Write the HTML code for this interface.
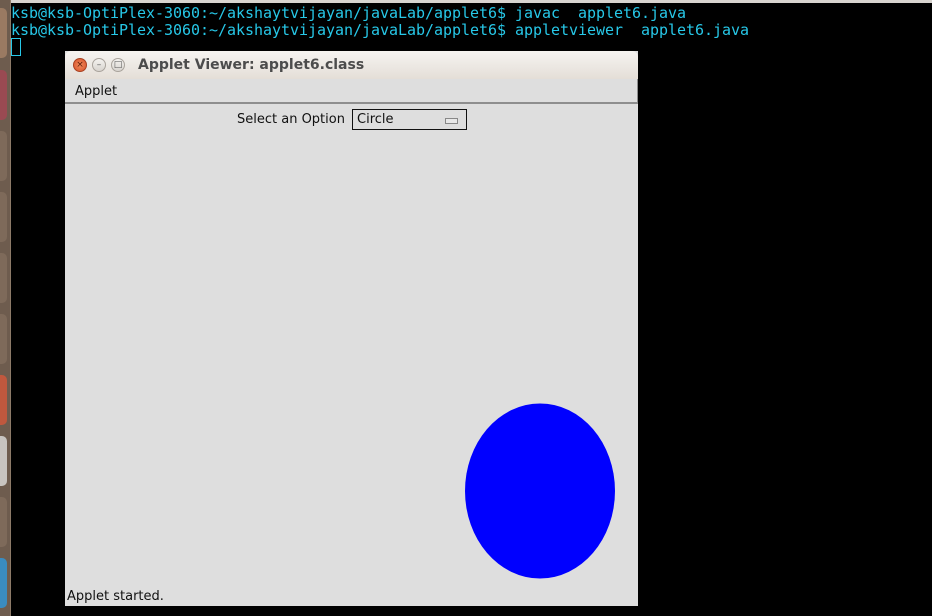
<!DOCTYPE html>
<html><head><style>
body{margin:0;width:932px;height:616px;background:#000;position:relative;overflow:hidden;font-family:"DejaVu Sans",sans-serif}
.top{position:absolute;left:0;top:0;width:932px;height:3px;background:#d8d4cf}
.launch{position:absolute;left:0;top:0;width:10px;height:616px;background:#6e5c4e}
.launch i{position:absolute;left:0;width:7px;height:50px;border-radius:0 5px 5px 0}
.edge{position:absolute;left:10px;top:0;width:1px;height:616px;background:#8c7a68}
.term{position:absolute;left:11px;top:5px;color:#27c8e8;font:15px/17px "DejaVu Sans Mono",monospace;white-space:pre;letter-spacing:-0.03px}
.cur{position:absolute;left:11px;top:38px;width:10px;height:18px;border:1px solid #27c8e8;box-sizing:border-box}
.win{position:absolute;left:65px;top:51px;width:573px;height:555px;background:#dedede}
.tb{height:28px;background:linear-gradient(#f6f4f1,#e4ded7);border-radius:6px 6px 0 0;position:relative}
.tb .t{position:absolute;left:73px;top:6px;font-weight:bold;font-size:14px;color:#4c4c4c}
.btn{position:absolute;top:7px;width:14px;height:14px;border-radius:50%;box-sizing:border-box;border:1px solid #a9a39c;background:linear-gradient(#f4f2ef,#d8d4cf);font-size:9px;line-height:12px;text-align:center;color:#555}
.menu{height:23px;border-bottom:2px solid #8e8e8e;border-right:1px solid #8e8e8e;font-size:13px;padding-left:10px;line-height:26px;color:#111}
.lbl{position:absolute;left:172px;top:61px;font-size:13px;color:#111}
.sel{position:absolute;left:287px;top:58px;width:115px;height:21px;border:1px solid #111;box-sizing:border-box;font-size:13px;line-height:20px;padding-left:4px;color:#111}
.sel b{position:absolute;right:8px;top:8px;width:11px;height:4px;border:1px solid #888;background:#e8e8e8}
.st{position:absolute;left:2px;bottom:2px;font-size:13px;color:#111}
</style></head><body>
<div class="top"></div>
<div class="launch">
<i style="top:8px;background:#9a7a62"></i><i style="top:70px;background:#9a4a52"></i><i style="top:131px;background:#7e6a5a"></i><i style="top:192px;background:#7e6a5a"></i><i style="top:253px;background:#7e6a5a"></i><i style="top:314px;background:#7e6a5a"></i><i style="top:375px;background:#c0583e"></i><i style="top:436px;background:#c8c4c0"></i><i style="top:497px;background:#7e6a5a"></i><i style="top:558px;background:#3a8cc0"></i>
</div>
<div class="edge"></div>
<div class="term">ksb@ksb-OptiPlex-3060:~/akshaytvijayan/javaLab/applet6$ javac  applet6.java
ksb@ksb-OptiPlex-3060:~/akshaytvijayan/javaLab/applet6$ appletviewer  applet6.java</div>
<div class="cur"></div>
<div class="win">
<div class="tb">
<div class="btn" style="left:8px;background:radial-gradient(#f08a5a,#d8522c);border-color:#a84020;color:#5a1a08">×</div>
<div class="btn" style="left:27px">–</div>
<div class="btn" style="left:46px">□</div>
<div class="t">Applet Viewer: applet6.class</div>
</div>
<div class="menu">Applet</div>
<div class="lbl">Select an Option</div>
<div class="sel">Circle<b></b></div>
<svg style="position:absolute;left:0;top:0" width="573" height="555"><ellipse cx="475" cy="440" rx="75" ry="87.5" fill="#0000ff"/></svg>
<div class="st">Applet started.</div>
</div>
</body></html>
